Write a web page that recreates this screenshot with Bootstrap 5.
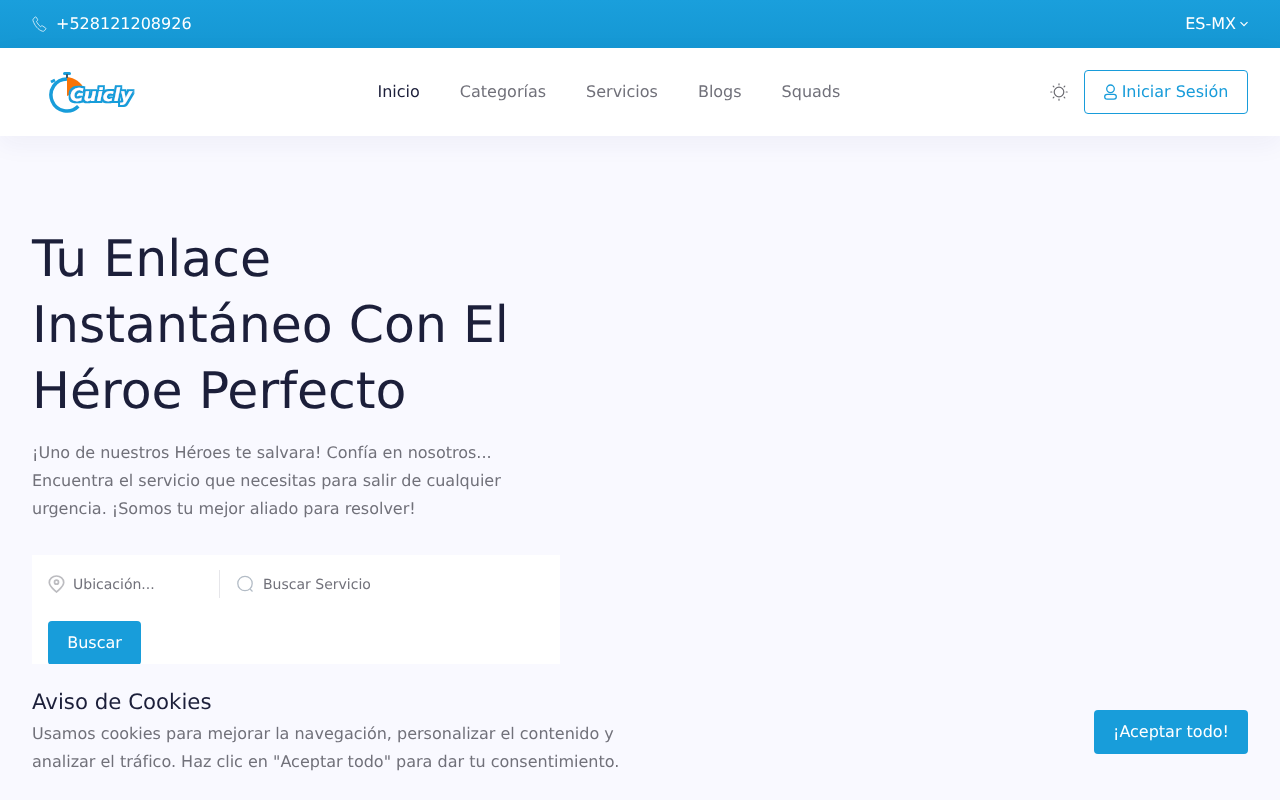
<!DOCTYPE html>
<html lang="es">
<head>
    <meta charset="UTF-8">
    <meta name="viewport" content="width=device-width, initial-scale=1.0">
    <title>Cuicly</title>
    <link rel="stylesheet" href="https://cdn.jsdelivr.net/npm/bootstrap@5.3.3/dist/css/bootstrap.min.css">
    <style>
        body { font-family: "DejaVu Sans", sans-serif; background: #f9f9ff; color: #1c1f3a; height: 800px; overflow: hidden; text-rendering: geometricPrecision; }
        .page-layer { will-change: transform; height: 800px; }
        .top-strip { height: 48px; background: linear-gradient(180deg, #1a9fdc, #1597d3); color: #fff; padding: 0 32px; }
        .main-nav { height: 88px; background: #fff; padding: 0 32px; box-shadow: 0 8px 24px rgba(40, 40, 110, .05); position: relative; }
        .logo-box { width: 345.5px; padding-left: 17px; }
        .menu-list { gap: 40px; }
        .menu-list a { color: #71717a; text-decoration: none; }
        .menu-list a.current { color: #1c1f3a; }
        .btn-login { height: 44px; width: 164px; border: 1px solid #189cda; color: #189cda; border-radius: 4px; font-size: 16px; padding: 0; text-rendering: geometricPrecision; }
        .hero-box { padding: 90px 32px 0; width: 592px; }
        .hero-title { font-size: 50.5px; line-height: 66px; font-weight: 400; margin-bottom: 15px; }
        .hero-text { font-size: 16px; line-height: 28px; color: #71717a; margin-bottom: 32px; }
        .search-box { width: 528px; background: #fff; padding: 15px 16px 0; height: 125px; }
        .search-field { height: 28px; font-size: 14px; color: #71717a; }
        .search-field span { padding-top: 2px; }
        .search-loc { width: 172px; border-right: 1px solid #e6e6ea; }
        .search-serv { padding-left: 17px; }
        .btn-cuicly { background: #189dda; color: #fff; border: 0; border-radius: 4px; font-size: 16px; height: 44px; text-rendering: geometricPrecision; }
        .btn-cuicly:hover { background: #189dda; color: #fff; }
        .btn-find { width: 93px; margin-top: 23px; padding: 0; }
        .btn-accept { width: 154px; padding: 0; margin-top: 21px; }
        .cookie-bar { position: absolute; left: 0; right: 0; bottom: 0; height: 136px; background: #f9f9ff; padding: 25px 32px 0; }
        .cookie-title { font-size: 21.3px; line-height: 28px; font-weight: 400; margin: 0 0 3px; }
        .cookie-text { font-size: 16px; line-height: 28px; color: #71717a; width: 620px; margin: 0; }
    </style>
</head>
<body>
<div class="page-layer position-relative">

<div class="top-strip d-flex align-items-center justify-content-between">
    <div class="d-flex align-items-center gap-2">
        <svg width="16" height="16" viewBox="0 0 16 16" fill="none" stroke="#d8eef9" stroke-width=".9"><path d="M1.5 2.600 3.200 1.100c.4-.3.9-.2 1.100.2l1.300 2.200c.2.4.1.8-.2 1.100l-.9.8c.6 1.500 2.300 3.900 3.900 5.200l1.100-.7c.4-.2.8-.2 1.100.1l2.900 1.900c.4.3.5.8.2 1.200l-1.200 1.500c-.5.6-1.300.9-2.100.6C6.100 13.900 2.500 9.300 1 4.600c-.2-.8 0-1.500.5-2Z"/></svg>
        <span>+528121208926</span>
    </div>
    <div class="d-flex align-items-center gap-1">
        <span>ES-MX</span>
        <svg width="8" height="6" viewBox="0 0 8 6" fill="none" stroke="#fff" stroke-width="1.200"><path d="M.5 1.200 4 4.700 7.500 1.200"/></svg>
    </div>
</div>

<nav class="main-nav d-flex align-items-center">
    <div class="logo-box">
        <svg class="d-block" width="90" height="44" viewBox="0 0 90 44">
            <defs>
                <filter id="logoEdge" x="-10%" y="-30%" width="120%" height="160%">
                    <feMorphology in="SourceAlpha" operator="dilate" radius="1.800" result="wide"/>
                    <feFlood flood-color="#189dda"/>
                    <feComposite in2="wide" operator="in" result="edge"/>
                    <feMorphology in="SourceGraphic" operator="dilate" radius=".35" result="heavy"/>
                    <feMerge><feMergeNode in="edge"/><feMergeNode in="heavy"/></feMerge>
                </filter>
            </defs>
            <path d="M18 7C26 8 32 12 35 19L18 26Z" fill="#f97306"/>
            <path d="M29.300 36.300A16 16 0 1 1 18 9" fill="none" stroke="#189dda" stroke-width="3.500"/>
            <rect x="14" y="2" width="8" height="3" rx="1.500" fill="#189dda"/>
            <rect x="17" y="4" width="2" height="4" fill="#3d5a6c"/>
            <path d="M2 12 6 10" stroke="#189dda" stroke-width="3"/>
            <text x="21" y="31" font-family="'DejaVu Sans', sans-serif" font-size="18" font-weight="700" font-style="italic" fill="#fff" textLength="62" lengthAdjust="spacingAndGlyphs" filter="url(#logoEdge)">Cuicly</text>
        </svg>
    </div>
    <div class="menu-list d-flex">
        <a class="current" href="#">Inicio</a>
        <a href="#">Categorías</a>
        <a href="#">Servicios</a>
        <a href="#">Blogs</a>
        <a href="#">Squads</a>
    </div>
    <div class="ms-auto d-flex align-items-center gap-3">
        <svg width="18" height="18" viewBox="0 0 18 18" fill="none" stroke="#6a6a70" stroke-width="1.200"><circle cx="9" cy="9" r="4.800"/><path stroke-linecap="round" d="M9 .8v1M9 16.200v1M.8 9h1M16.200 9h1M3.200 3.200l.7.7M14.100 14.100l.7.7M3.200 14.800l.7-.7M14.100 3.900l.7-.7"/></svg>
        <button class="btn btn-login d-flex align-items-center justify-content-center gap-1" type="button">
            <svg width="14" height="16" viewBox="0 0 14 16" fill="none" stroke="#189cda" stroke-width="1.300"><circle cx="6.500" cy="4.800" r="3.800"/><rect x=".7" y="10.400" width="11.600" height="4.800" rx="2.400"/></svg>
            Iniciar Sesión
        </button>
    </div>
</nav>

<section class="hero-box">
    <h1 class="hero-title">Tu Enlace Instantáneo Con El Héroe Perfecto</h1>
    <p class="hero-text">¡Uno de nuestros Héroes te salvara! Confía en nosotros... Encuentra el servicio que necesitas para salir de cualquier urgencia. ¡Somos tu mejor aliado para resolver!</p>
    <div class="search-box">
        <div class="d-flex">
            <div class="search-field search-loc d-flex align-items-center gap-2">
                <svg width="17" height="18" viewBox="0 0 17 18" fill="none" stroke="#bcbcc0" stroke-width="1.700"><path d="M8.500 17C6 14.500 1.300 11.500 1.300 7.500A7.200 6.500 0 0 1 15.700 7.500C15.700 11.500 11 14.500 8.500 17Z"/><circle cx="8.500" cy="7.200" r="2"/></svg>
                <span>Ubicación...</span>
            </div>
            <div class="search-field search-serv d-flex align-items-center gap-2">
                <svg width="18" height="18" viewBox="0 0 18 18" fill="none" stroke="#b3bcc6" stroke-width="1.300"><circle cx="8" cy="8.500" r="7.200"/><path d="M13 14 15.500 16.500"/></svg>
                <span>Buscar Servicio</span>
            </div>
        </div>
        <button class="btn btn-cuicly btn-find" type="button">Buscar</button>
    </div>
</section>

<div class="cookie-bar d-flex justify-content-between">
    <div>
        <h2 class="cookie-title">Aviso de Cookies</h2>
        <p class="cookie-text">Usamos cookies para mejorar la navegación, personalizar el contenido y analizar el tráfico. Haz clic en "Aceptar todo" para dar tu consentimiento.</p>
    </div>
    <div>
        <button class="btn btn-cuicly btn-accept" type="button">¡Aceptar todo!</button>
    </div>
</div>

</div>
<script src="https://cdn.jsdelivr.net/npm/bootstrap@5.3.3/dist/js/bootstrap.bundle.min.js"></script>
</body>
</html>
